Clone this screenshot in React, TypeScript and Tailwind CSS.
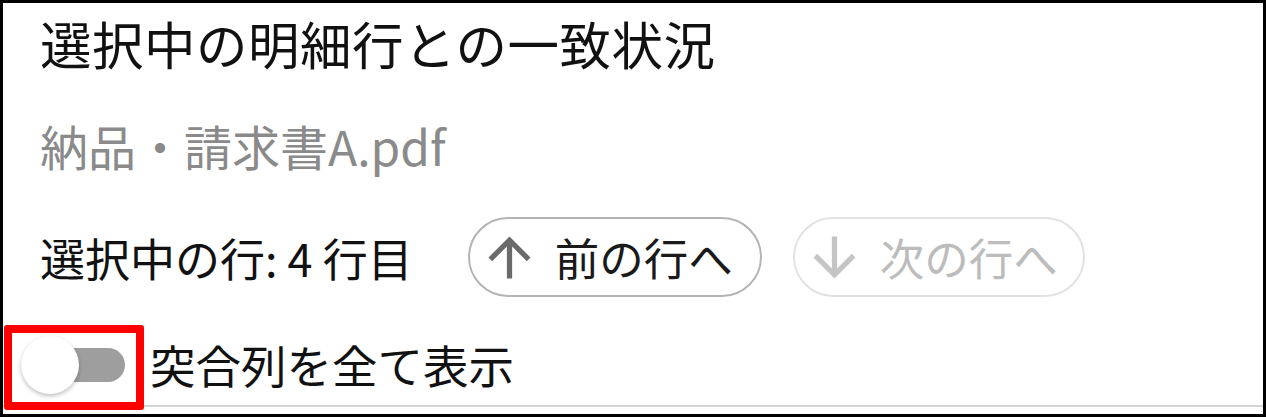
import React from "react";

const font = { fontFamily: '"Noto Sans CJK JP", "Noto Sans", sans-serif' };

function ArrowIcon({ down, className }: { down?: boolean; className: string }) {
  return (
    <svg viewBox="0 0 24 24" className={className} fill="currentColor">
      <path
        d="M4 12l1.41 1.41L11 7.83V20h2V7.83l5.58 5.59L20 12l-8-8-8 8z"
        transform={down ? "rotate(180 12 12)" : undefined}
      />
    </svg>
  );
}

export default function App() {
  return (
    <div
      className="relative w-[1266px] h-[417px] border-[3px] border-black bg-white overflow-hidden box-border"
      style={font}
    >
      <div className="h-[404px] border-b-2 border-[#d4d4d4] flex flex-col">
        {/* title */}
        <div className="h-[80px] pl-[37px] flex items-center">
          <h1 className="text-[51.5px] leading-none text-[#111] tracking-[0.5px]">
            選択中の明細行との一致状況
          </h1>
        </div>

        {/* file name */}
        <div className="h-[124px] pl-[37px] flex items-center">
          <p className="text-[48px] leading-none text-[#8a8a8a]">納品・請求書A.pdf</p>
        </div>

        {/* row navigation */}
        <div className="h-[100px] pl-[37px] flex items-center">
          <span className="text-[45px] leading-none text-[#111]">選択中の行: 4 行目</span>
          <div className="ml-[55px] flex items-center gap-[31px]">
            <button
              type="button"
              className="w-[294px] h-[80px] rounded-full border-2 border-[#b4b4b4] flex items-center pl-[8px]"
            >
              <ArrowIcon className="w-[63px] h-[63px] text-[#6a6a6a] shrink-0" />
              <span className="ml-[14px] text-[44.5px] leading-none text-[#1a1a1a]">前の行へ</span>
            </button>
            <button
              type="button"
              disabled
              className="w-[292px] h-[80px] rounded-full border-2 border-[#e2e2e2] flex items-center pl-[8px]"
            >
              <ArrowIcon down className="w-[63px] h-[63px] text-[#c4c4c4] shrink-0" />
              <span className="ml-[14px] text-[44.5px] leading-none text-[#bcbcbc]">次の行へ</span>
            </button>
          </div>
        </div>

        {/* toggle */}
        <div className="flex-1 pl-[17px] pt-[28px] flex items-start">
          <div className="relative w-[108px] h-[60px] shrink-0">
            <div className="absolute left-[14px] right-[3px] top-[13px] h-[34px] rounded-full bg-[#9e9e9e]" />
            <div className="absolute left-[1px] top-[1px] w-[58px] h-[58px] rounded-full bg-white shadow-[0_2px_4px_rgba(0,0,0,0.25)]" />
          </div>
          <span className="ml-[22px] h-[60px] flex items-center text-[45.5px] leading-none text-[#111]">
            突合列を全て表示
          </span>
        </div>
      </div>

      {/* annotation frame */}
      <div className="absolute left-[1px] top-[322px] w-[140px] h-[85px] border-[8px] border-[#ff0000] rounded-[3px]" />
    </div>
  );
}
